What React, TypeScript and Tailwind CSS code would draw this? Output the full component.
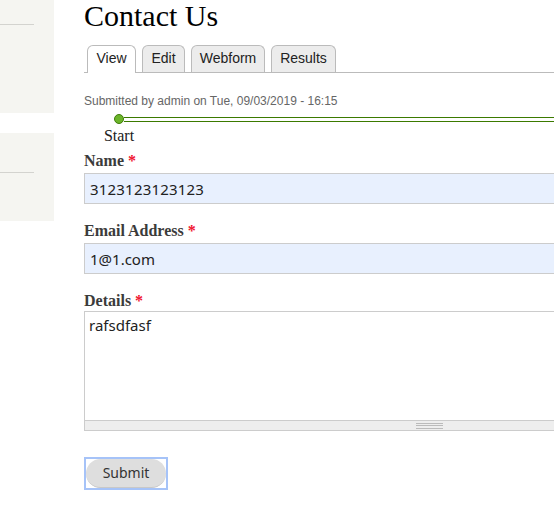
import React from "react";

const serif = { fontFamily: '"Liberation Serif", "Times New Roman", serif' };
const sans = { fontFamily: '"Liberation Sans", Arial, sans-serif' };
const noto = { fontFamily: '"Noto Sans", "Open Sans", sans-serif' };

function Tab({ label, active, w }: { label: string; active?: boolean; w: string }) {
  return (
    <div
      className={
        (active
          ? "h-[28px] -mb-px bg-white "
          : "h-[27px] bg-[#ececec] ") +
        w +
        " text-center border border-b-0 border-[#bbbbbb] rounded-t-[6px] text-[14px] leading-[25px] text-[#222]"
      }
      style={sans}
    >
      {label}
    </div>
  );
}

function Label({ text }: { text: string }) {
  return (
    <div className="text-[16px] leading-[20px] font-bold text-[#3b3b3b]" style={serif}>
      {text} <span className="text-[#f0142f] font-bold">*</span>
    </div>
  );
}

export default function App() {
  return (
    <div className="w-[554px] h-[521px] overflow-hidden bg-white flex">
      <div className="w-[54px] shrink-0 flex flex-col">
        <div className="h-[113px] bg-[#f5f5f1] pt-[24px]">
          <div className="w-[34px] h-px bg-[#d3d3cf]" />
        </div>
        <div className="h-[88px] mt-[20px] bg-[#f5f5f1] pt-[39px]">
          <div className="w-[34px] h-px bg-[#d3d3cf]" />
        </div>
      </div>
      <div className="ml-[30px] w-[691px] shrink-0 flex flex-col">
        <h1 className="text-[30px] leading-[31px] text-black" style={serif}>
          Contact Us
        </h1>
        <div className="mt-[14px] flex items-end gap-[6px] pl-[3px] border-b border-[#bbbbbb] h-[28px]">
          <Tab label="View" active w="w-[49px]" />
          <Tab label="Edit" w="w-[43px]" />
          <Tab label="Webform" w="w-[74px]" />
          <Tab label="Results" w="w-[65px]" />
        </div>
        <div className="mt-[20px] text-[12px] leading-[16px] text-[#666666]" style={sans}>
          Submitted by admin on Tue, 09/03/2019 - 16:15
        </div>
        <div className="mt-[5px] ml-[30px] flex items-center h-[10px]">
          <div className="w-[10px] h-[10px] rounded-full bg-[#6cb52a] border border-[#3f7d0a] shrink-0" />
          <div className="flex-1 h-[5px] border-y border-[#3b7a00]" />
        </div>
        <div className="mt-[2px] ml-[4px] w-[62px] text-center text-[16px] leading-[20px] text-[#222]" style={serif}>
          Start
        </div>
        <div className="mt-[5px]">
          <Label text="Name" />
        </div>
        <div
          className="mt-[2px] h-[31px] border border-[#cccccc] bg-[#e8f0fe] pl-[5px] flex items-center text-[15px] leading-[20px] text-[#222] tracking-[0.2px]"
          style={noto}
        >
          3123123123123
        </div>
        <div className="mt-[17px]">
          <Label text="Email Address" />
        </div>
        <div
          className="mt-[2px] h-[31px] border border-[#cccccc] bg-[#e8f0fe] pl-[5px] flex items-center text-[15px] leading-[20px] text-[#222]"
          style={noto}
        >
          1@1.com
        </div>
        <div className="mt-[17px]">
          <Label text="Details" />
        </div>
        <div>
          <div
            className="h-[110px] border border-[#cccccc] bg-white px-[4px] pt-[3px] text-[15px] leading-[20px] text-[#222]"
            style={noto}
          >
            rafsdfasf
          </div>
          <div className="h-[10px] border-x border-b border-[#cccccc] bg-[#eeeeee] flex justify-center">
            <div className="w-[27px] mt-[2px] flex flex-col gap-[1.3px]">
              <div className="h-px bg-[#bbbbbb]" />
              <div className="h-px bg-[#bbbbbb]" />
              <div className="h-px bg-[#bbbbbb]" />
            </div>
          </div>
        </div>
        <div className="mt-[26px] w-[84px] h-[33px] border-2 border-[#a6c3f8]">
          <button
            className="w-full h-full rounded-full bg-[#dedede] border-b border-[#c8c8c8] text-[14px] leading-[20px] text-[#333]"
            style={noto}
          >
            Submit
          </button>
        </div>
      </div>
    </div>
  );
}
